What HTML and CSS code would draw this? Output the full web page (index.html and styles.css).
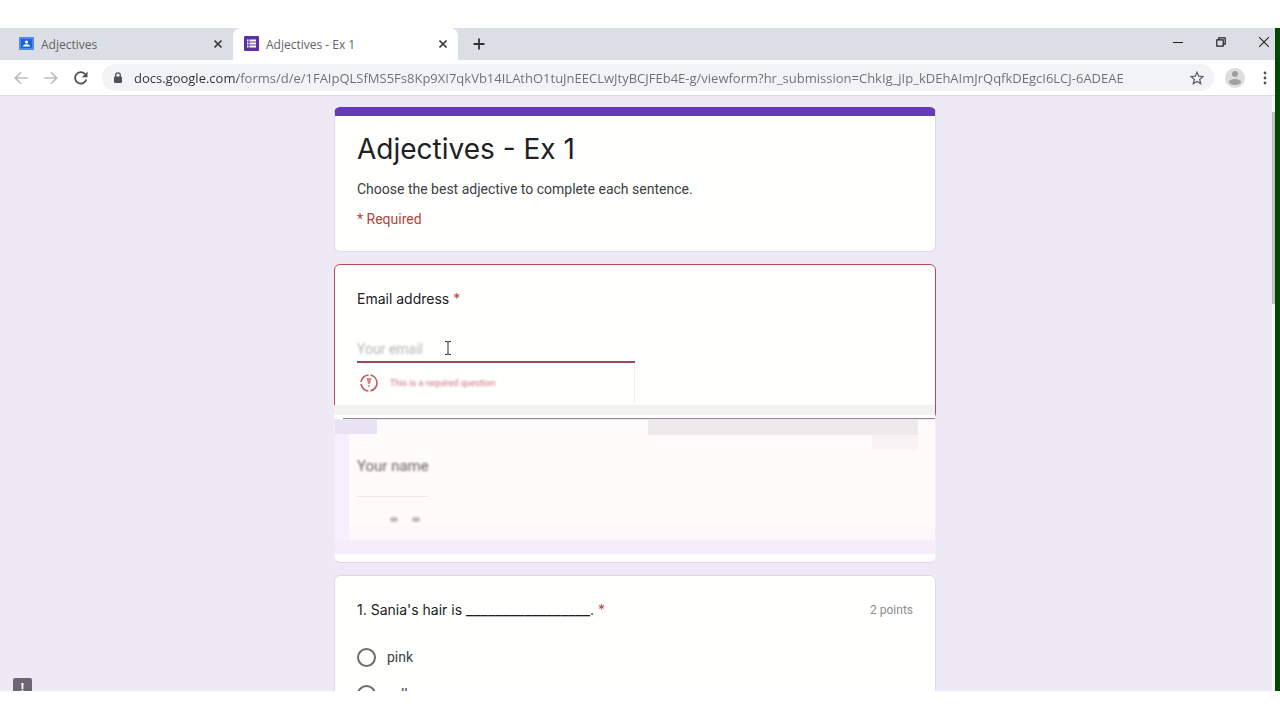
FILE: index.html
```html
<!DOCTYPE html>
<html lang="en">
<head>
    <meta charset="UTF-8">
    <meta name="viewport" content="width=device-width, initial-scale=1.0">
    <title>Adjectives - Ex 1</title>
    <link rel="stylesheet" href="styles.css">
</head>
<body>
    <div class="window">
        <div class="browser">
            <div class="tabs">
                <div class="tab">
                    <svg class="favicon" viewBox="0 0 16 16" width="16" height="16">
                        <rect x="0" y="1" width="15" height="13" rx="1" fill="#4a8af0"/>
                        <rect x="2" y="3" width="11" height="9" fill="#1a66d6"/>
                        <circle cx="7.500" cy="6" r="1.600" fill="#fff"/>
                        <path d="M4 10.500c0-1.600 1.800-2.300 3.500-2.300s3.500.7 3.500 2.300z" fill="#fff"/>
                    </svg>
                    <span class="tab-title">Adjectives</span>
                    <button class="close" aria-label="Close tab">
                        <svg viewBox="0 0 8 8" width="8" height="8"><path d="M.5.5l7 7M7.500.5l-7 7" stroke="#3c4043" stroke-width="1.600"/></svg>
                    </button>
                </div>
                <div class="tab active">
                    <svg class="favicon" viewBox="0 0 16 16" width="16" height="16">
                        <rect x="0" y="0" width="15" height="15" rx="1" fill="#5a32a3"/>
                        <path d="M3 4.500h1.500M3 7.500h1.500M3 10.500h1.500M5.500 4.500H12M5.500 7.500H12M5.500 10.500H12" stroke="#fff" stroke-width="1.800"/>
                    </svg>
                    <span class="tab-title">Adjectives - Ex 1</span>
                    <button class="close" aria-label="Close tab">
                        <svg viewBox="0 0 8 8" width="8" height="8"><path d="M.5.5l7 7M7.500.5l-7 7" stroke="#3c4043" stroke-width="1.600"/></svg>
                    </button>
                </div>
                <button class="new-tab" aria-label="New tab">
                    <svg viewBox="0 0 12 12" width="12" height="12"><path d="M6 .5v11M.5 6h11" stroke="#2f3336" stroke-width="1.800"/></svg>
                </button>
                <div class="window-buttons">
                    <button aria-label="Minimize"><svg viewBox="0 0 10 10" width="10" height="10"><path d="M0 5.500h10" stroke="#222"/></svg></button>
                    <button aria-label="Restore"><svg viewBox="0 0 10 10" width="10" height="10" fill="none" stroke="#222" stroke-width="1.200"><path d="M.8 2.800h6.400v6.400H.8zM2.800 2.800v-2h6.400v6.400h-2"/></svg></button>
                    <button aria-label="Close"><svg viewBox="0 0 10 10" width="10" height="10"><path d="M0 0l10 10M10 0L0 10" stroke="#222" stroke-width="1.100"/></svg></button>
                </div>
            </div>

            <div class="toolbar">
                <button class="nav" aria-label="Back"><svg viewBox="0 0 14 14" width="14" height="14" fill="none" stroke="#b9bbbd" stroke-width="1.600"><path d="M13.500 7H1.500M7 1.200L1.200 7 7 12.800"/></svg></button>
                <button class="nav" aria-label="Forward"><svg viewBox="0 0 14 14" width="14" height="14" fill="none" stroke="#b9bbbd" stroke-width="1.600"><path d="M.5 7h12M7 1.200L12.800 7 7 12.800"/></svg></button>
                <button class="nav" aria-label="Reload"><svg viewBox="0 0 14 14" width="14" height="14"><path d="M12.300 8.500A5.700 5.700 0 1 1 11 3" fill="none" stroke="#4d5053" stroke-width="1.800"/><path d="M13.500.5v5.700H7.800z" fill="#4d5053"/></svg></button>
                <div class="omnibox">
                    <svg viewBox="0 0 10 12" width="10" height="12"><path d="M2.700 5V3.200a2.300 2.300 0 0 1 4.600 0V5" fill="none" stroke="#505356" stroke-width="1.300"/><rect x="1" y="4.500" width="8" height="6.500" rx="1" fill="#505356"/></svg>
                    <input class="url" type="text" aria-label="Address" value="docs.google.com/forms/d/e/1FAIpQLSfMS5Fs8Kp9XI7qkVb14ILAthO1tuJnEECLwJtyBCJFEb4E-g/viewform?hr_submission=ChkIg_jIp_kDEhAImJrQqfkDEgcI6LCJ-6ADEAE">
                    <button aria-label="Bookmark"><svg viewBox="0 0 14 14" width="14" height="14"><path d="M7 1.200l1.700 4 4.300.4-3.300 2.800 1 4.200L7 10.400l-3.700 2.200 1-4.200L1 5.600l4.300-.4z" fill="none" stroke="#5f6368" stroke-width="1.300"/></svg></button>
                </div>
                <button class="profile" aria-label="Profile">
                    <svg viewBox="0 0 20 20" width="20" height="20"><circle cx="10" cy="10" r="10" fill="#dddedb"/><circle cx="10" cy="6" r="3" fill="#a0a19f"/><ellipse cx="10" cy="14" rx="6" ry="3" fill="#a0a19f"/></svg>
                </button>
                <button class="menu" aria-label="Menu">
                    <svg viewBox="0 0 4 14" width="4" height="14" fill="#505356"><circle cx="2" cy="2" r="1.400"/><circle cx="2" cy="7" r="1.400"/><circle cx="2" cy="12" r="1.400"/></svg>
                </button>
            </div>

            <div class="viewport">
                <form class="page">
                    <section class="card header">
                        <h1>Adjectives - Ex 1</h1>
                        <p>Choose the best adjective to complete each sentence.</p>
                        <p class="required">* Required</p>
                    </section>

                    <section class="card email">
                        <label class="question" for="email">Email address <span class="star">*</span></label>
                        <div class="email-field">
                            <input id="email" type="text" placeholder="Your email">
                            <svg class="cursor" viewBox="0 0 8 16" width="8" height="16"><path d="M1 1.500h2l1 .5 1-.5h2M1 14.500h2l1-.5 1 .5h2M4 2v12" fill="none" stroke="#333"/></svg>
                        </div>
                        <div class="error">
                            <svg viewBox="0 0 20 20" width="20" height="20"><circle cx="10" cy="10" r="8" fill="none" stroke="#c4575f" stroke-width="1.600" stroke-dasharray="11 2"/><path d="M7.500 5h5L11 11H9z" fill="#dd8589"/><circle cx="10" cy="13" r="1" fill="#dd8589"/></svg>
                            <span>This is a required question</span>
                        </div>
                    </section>

                    <section class="card name">
                        <label for="name">Your name</label>
                        <input id="name" type="text">
                        <div class="dots"><i></i><i></i></div>
                    </section>

                    <section class="card choice">
                        <div class="choice-head">
                            <h2 class="question">1. Sania's hair is <span class="blank">_________________</span>. <span class="star">*</span></h2>
                            <span class="points">2 points</span>
                        </div>
                        <label class="option"><input type="radio" name="q1">pink</label>
                        <label class="option"><input type="radio" name="q1">yellow</label>
                    </section>
                </form>
                <button class="report" type="button" aria-label="Report a problem">!</button>
                <div class="scrollbar"><div class="thumb"></div></div>
            </div>
        </div>
    </div>
</body>
</html>
```
FILE: styles.css
```css
* {
    box-sizing: border-box;
}

body {
    margin: 0;
    background-color: #fff;
    font-family: Roboto, Arial, sans-serif;
    font-size: 14px;
    color: #202124;
}

button {
    display: flex;
    align-items: center;
    justify-content: center;
    padding: 0;
    border: none;
    background: none;
}

svg {
    flex: none;
}

.window {
    height: 100vh;
    padding: 28px 0 29px;
}

.browser {
    display: flex;
    flex-direction: column;
    height: 100%;
    border-right: 5px solid #004a00;
    overflow: hidden;
}

/* tab strip */
.tabs {
    display: flex;
    flex: none;
    height: 32px;
    background-color: #dbdee4;
    font-family: "Open Sans", sans-serif;
    font-size: 12px;
    color: #5f6368;
}

.tab {
    display: flex;
    align-items: center;
    gap: 6px;
    width: 225px;
    padding: 0 10px 0 11px;
}

.tab:first-child {
    width: 233px;
    padding-left: 19px;
}

.tab.active {
    background-color: #fff;
    border-radius: 8px 8px 0 0;
}

.tab-title {
    flex: 1;
}

.close {
    width: 10px;
    height: 16px;
}

.new-tab {
    width: 42px;
}

.window-buttons {
    display: flex;
    gap: 33px;
    margin-left: auto;
    padding: 0 6px 4px 0;
}

/* toolbar */
.toolbar {
    display: flex;
    flex: none;
    align-items: center;
    height: 36px;
    padding: 0 8px 0 6px;
    background-color: #fff;
    border-bottom: 1px solid #dddde0;
}

.nav {
    width: 30px;
    height: 28px;
}

.omnibox {
    display: flex;
    flex: 1;
    align-items: center;
    gap: 11px;
    height: 27px;
    margin-left: 6px;
    padding: 0 10px 0 11px;
    border-radius: 14px;
    background-color: #f1f3f4;
}

.url {
    flex: 1;
    min-width: 0;
    padding: 0;
    border: none;
    outline: none;
    font-family: "Open Sans", sans-serif;
    font-size: 13px;
    color: transparent;
    background: linear-gradient(to right, #303336 104px, #6b6f73 104px);
    background-clip: text;
    -webkit-background-clip: text;
}

.profile {
    margin-left: 11px;
}

.menu {
    margin-left: 18px;
}

/* form page */
.viewport {
    position: relative;
    display: flex;
    flex: 1;
    min-height: 0;
    background-color: #ede9f5;
    overflow: hidden;
}

.page {
    flex: 1;
    padding: 11px 16px 0;
}

.card {
    max-width: 602px;
    margin: 0 auto 12px;
    padding: 0 22px;
    background-color: #fffffd;
    border: 1px solid #dedbe4;
    border-radius: 6px;
}

.header {
    height: 145px;
    padding-top: 13px;
    border-top: 9px solid #673ab7;
}

h1 {
    margin: 0;
    font-family: Inter, Roboto, sans-serif;
    font-size: 28px;
    font-weight: 400;
    line-height: 40px;
}

p {
    margin: 10px 0 0;
    line-height: 20px;
    color: #3c4043;
}

.required,
.star {
    color: #b3443f;
}

.question {
    display: block;
    margin: 0;
    font-family: Inter, Roboto, sans-serif;
    font-size: 14px;
    font-weight: 400;
    line-height: 22px;
}

.email {
    position: relative;
    height: 155px;
    margin-bottom: 1px;
    padding-top: 23px;
    border-color: #bf4850;
}

/* pale band and grey line along the lower edge of the card */
.email::after {
    content: "";
    position: absolute;
    left: -1px;
    right: 0;
    bottom: -1px;
    height: 14px;
    background:
        linear-gradient(#8c8a8c, #8c8a8c) 9px 13px / 100% 1px no-repeat,
        linear-gradient(#f2f3ef 10px, #fff 10px);
}

.email-field {
    position: relative;
    width: 278px;
    height: 31px;
    margin-top: 22px;
    border-bottom: 2px solid #a1485d;
}

.email-field input {
    width: 100%;
    height: 29px;
    padding: 4px 0 0;
    border: none;
    outline: none;
    background: none;
    font-family: Roboto, Arial, sans-serif;
    font-size: 14px;
    filter: blur(1px);
}

.email-field input::placeholder {
    color: #b5b5b3;
}

.cursor {
    position: absolute;
    left: 87px;
    top: 8px;
}

.error {
    display: flex;
    align-items: center;
    gap: 11px;
    width: 278px;
    height: 40px;
    border-right: 1px solid #f1eff3;
}

.error span {
    font-size: 9px;
    color: #c6707c;
    filter: blur(1px);
}

.error svg {
    margin-left: 2px;
}

.name {
    display: flex;
    flex-direction: column;
    height: 143px;
    padding-top: 35px;
    border-color: #f3edf8;
    border-top: none;
    border-bottom-color: #dcd6e6;
    border-radius: 0 0 6px 6px;
    background:
        linear-gradient(#e8e3f4, #e8e3f4) 0 0 / 42px 14px no-repeat,
        linear-gradient(#eeeaec, #eeeaec) 313px 0 / 270px 15px no-repeat,
        linear-gradient(#f9f4f4, #f9f4f4) 537px 15px / 46px 15px no-repeat,
        linear-gradient(to right, #f6effc 14px, transparent 14px) 0 0 / 100% 120px no-repeat,
        linear-gradient(#fdfcfb 107px, #fcf7f8 107px, #fcf7f8 120px, #f6edfb 120px, #f6edfb 134px, #fff 134px);
}

.name label {
    width: 80px;
    font-size: 15px;
    line-height: 22px;
    color: #68635f;
    filter: blur(1px);
}

.name input {
    width: 72px;
    height: 18px;
    margin-top: 2px;
    padding: 0;
    border: none;
    border-bottom: 1px solid #eee9e9;
    background: none;
}

.dots {
    display: flex;
    gap: 14px;
    padding: 20px 0 0 33px;
    filter: blur(1px);
}

.dots i {
    width: 8px;
    height: 5px;
    border-radius: 50%;
    background-color: #bdb7b7;
}

.choice {
    height: 300px;
    padding-top: 22px;
}

.choice-head {
    display: flex;
    justify-content: space-between;
    align-items: center;
    margin-bottom: 20px;
}

.blank {
    font-size: 16px;
}

.points {
    font-size: 12px;
    color: #8a8d91;
}

.option {
    display: flex;
    align-items: center;
    gap: 11px;
    height: 32px;
    margin-bottom: 5px;
    color: #3c4043;
}

.option input {
    appearance: none;
    width: 19px;
    height: 19px;
    margin: 0;
    border: 2px solid #6b6d6b;
    border-radius: 50%;
}

.report {
    position: absolute;
    left: 13px;
    bottom: -6px;
    width: 19px;
    height: 19px;
    border-radius: 2px;
    background-color: #6c6672;
    color: #fff;
    font-size: 13px;
    font-weight: 700;
}

.scrollbar {
    width: 5px;
    padding: 16px 0 0 2px;
    background: linear-gradient(to right, #ede9f5 2px, #f4f6f4 2px);
}

.thumb {
    height: 192px;
    background-color: #bcc1bc;
}
```
